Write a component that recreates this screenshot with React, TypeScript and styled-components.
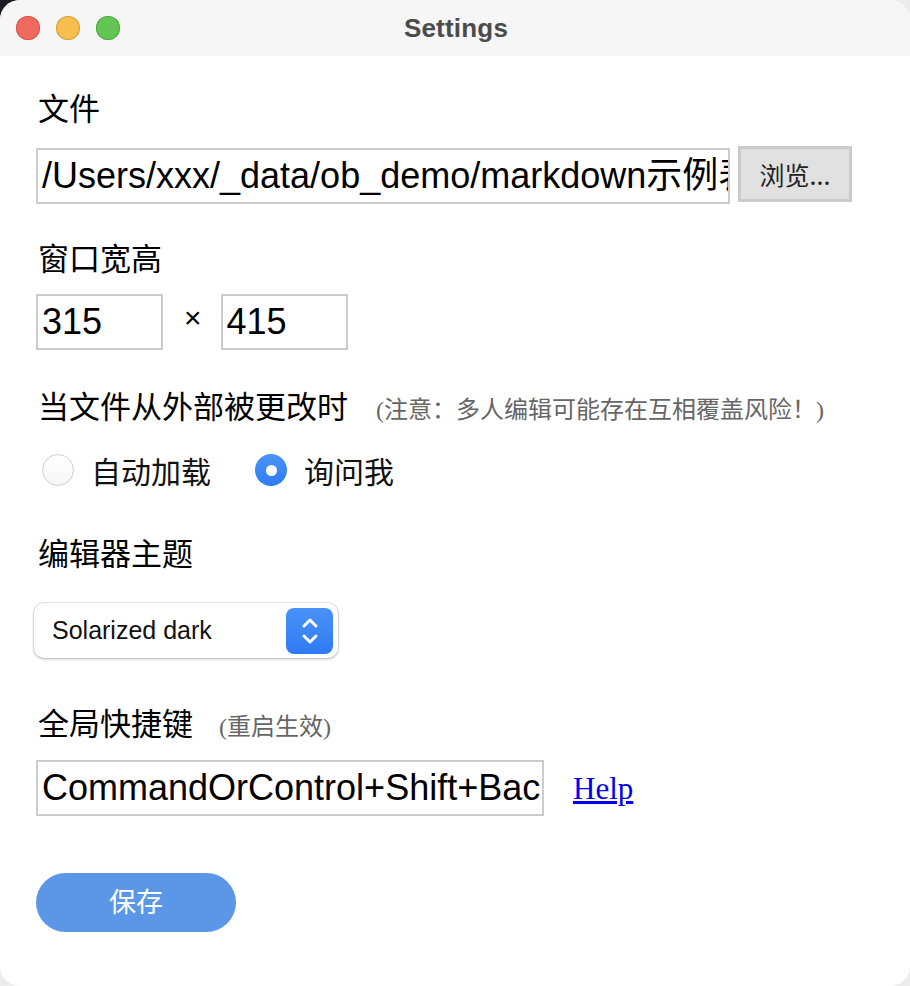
import React from "react";
import styled, { createGlobalStyle } from "styled-components";

const Global = createGlobalStyle`
  html, body { margin: 0; padding: 0; }
  body {
    width: 910px;
    height: 986px;
    overflow: hidden;
    background: linear-gradient(135deg, #1b1b24 0%, #1b1b24 2.5%, #ececec 6%, #ececec 100%);
  }
  #root { width: 910px; height: 986px; }
`;

const Window = styled.div`
  width: 910px;
  height: 986px;
  background: #ffffff;
  border-radius: 20px;
  overflow: hidden;
  display: flex;
  flex-direction: column;
`;

const TitleBar = styled.div`
  position: relative;
  height: 56px;
  flex: none;
  background: #f6f6f6;
  display: flex;
  align-items: center;
  justify-content: center;
`;

const Lights = styled.div`
  position: absolute;
  left: 16px;
  top: 16px;
  display: flex;
  gap: 16px;
`;

const Light = styled.span<{ $c: string; $b: string }>`
  width: 24px;
  height: 24px;
  border-radius: 50%;
  background: ${(p) => p.$c};
  box-shadow: inset 0 0 0 1px ${(p) => p.$b};
`;

const Title = styled.div`
  font-family: "Liberation Sans", Arial, sans-serif;
  font-weight: 700;
  font-size: 26px;
  color: #4b4b4b;
  letter-spacing: 0.2px;
  margin-left: 2px;
`;

const Content = styled.div`
  display: flex;
  flex-direction: column;
  align-items: flex-start;
  padding: 34px 0 0 36px;
  font-family: "Liberation Serif", "Noto Sans CJK SC", serif;
  color: #000;
`;

const Label = styled.div<{ $mt?: number }>`
  height: 40px;
  line-height: 40px;
  font-size: 31px;
  margin-top: ${(p) => p.$mt ?? 0}px;
  padding-left: 2px;
  white-space: nowrap;
  display: flex;
  align-items: baseline;
`;

const Note = styled.span<{ $ml: number }>`
  font-size: 24px;
  color: #666;
  margin-left: ${(p) => p.$ml}px;
`;

const Row = styled.div<{ $mt: number }>`
  display: flex;
  align-items: center;
  margin-top: ${(p) => p.$mt}px;
`;

const TextInput = styled.div<{ $w: number }>`
  box-sizing: border-box;
  width: ${(p) => p.$w}px;
  height: 56px;
  border: 2px solid #cccccc;
  background: #fff;
  padding: 0 4px;
  overflow: hidden;
  white-space: nowrap;
  font-family: "Liberation Sans", "Noto Sans CJK SC", Arial, sans-serif;
  font-size: 36px;
  line-height: 52px;
  color: #000;
`;

const BrowseButton = styled.div`
  box-sizing: border-box;
  margin-left: 8px;
  margin-top: -4px;
  width: 114px;
  height: 56px;
  background: #e1e1e1;
  border: 3px solid #cbcbcb;
  display: flex;
  align-items: center;
  justify-content: center;
  font-family: "Noto Sans CJK SC", sans-serif;
  font-size: 25px;
  color: #222;
`;

const Times = styled.span`
  font-family: "Liberation Sans", Arial, sans-serif;
  font-size: 30px;
  margin: 0 19px 8px 21px;
`;

const RadioGroup = styled.div`
  display: flex;
  align-items: center;
  margin-top: 22px;
  height: 40px;
  padding-left: 6px;
`;

const RadioItem = styled.label`
  display: flex;
  align-items: center;
  margin-right: 44px;
  font-family: "Noto Sans CJK SC", sans-serif;
  font-size: 30px;
  color: #111;
`;

const RadioCircle = styled.span<{ $on?: boolean }>`
  box-sizing: border-box;
  width: 32px;
  height: 32px;
  border-radius: 50%;
  margin-right: 17px;
  display: flex;
  align-items: center;
  justify-content: center;
  ${(p) =>
    p.$on
      ? `background: linear-gradient(#4b93f8, #2f7cf4); border: none;`
      : `background: linear-gradient(#ffffff, #f6f6f6); border: 1px solid #cfcfcf;`}
`;

const RadioDot = styled.span`
  width: 11px;
  height: 11px;
  border-radius: 50%;
  background: #fff;
`;

const Select = styled.div`
  box-sizing: border-box;
  margin-top: 28px;
  margin-left: -2px;
  width: 304px;
  height: 55px;
  border-radius: 10px;
  background: #fff;
  box-shadow: 0 0 0 1px rgba(0, 0, 0, 0.08), 0 1px 3px rgba(0, 0, 0, 0.25);
  display: flex;
  align-items: center;
  justify-content: space-between;
  padding: 0 5px 0 18px;
`;

const SelectText = styled.span`
  font-family: "Liberation Sans", Arial, sans-serif;
  font-size: 25px;
  color: #111;
`;

const SelectArrows = styled.span`
  width: 47px;
  height: 46px;
  border-radius: 8px;
  background: linear-gradient(#4a92f8, #2f7af4);
  display: flex;
  align-items: center;
  justify-content: center;
`;

const HelpLink = styled.a`
  margin-left: 29px;
  font-family: "Liberation Serif", serif;
  font-size: 31px;
  color: #0000ee;
  text-decoration: underline;
  margin-top: 2px;
`;

const SaveButton = styled.button`
  margin-top: 57px;
  width: 200px;
  height: 59px;
  border: none;
  border-radius: 30px;
  background: #5b97e6;
  color: #fff;
  font-family: "Noto Sans CJK SC", sans-serif;
  font-size: 27px;
  display: flex;
  align-items: center;
  justify-content: center;
  padding: 0 0 4px 0;
`;

export default function App() {
  return (
    <>
      <Global />
      <Window>
        <TitleBar>
          <Lights>
            <Light $c="#ee6a5f" $b="#d8564b" />
            <Light $c="#f5be4f" $b="#d9a23a" />
            <Light $c="#62c554" $b="#4eab40" />
          </Lights>
          <Title>Settings</Title>
        </TitleBar>
        <Content>
          <Label>文件</Label>
          <Row $mt={18}>
            <TextInput $w={694}>/Users/xxx/_data/ob_demo/markdown示例表格.md</TextInput>
            <BrowseButton>浏览...</BrowseButton>
          </Row>
          <Label $mt={36}>窗口宽高</Label>
          <Row $mt={14}>
            <TextInput $w={127}>315</TextInput>
            <Times>×</Times>
            <TextInput $w={127}>415</TextInput>
          </Row>
          <Label $mt={38}>
            当文件从外部被更改时
            <Note $ml={28}>(注意：多人编辑可能存在互相覆盖风险！)</Note>
          </Label>
          <RadioGroup>
            <RadioItem>
              <RadioCircle />
              自动加载
            </RadioItem>
            <RadioItem>
              <RadioCircle $on>
                <RadioDot />
              </RadioCircle>
              询问我
            </RadioItem>
          </RadioGroup>
          <Label $mt={45}>编辑器主题</Label>
          <Select>
            <SelectText>Solarized dark</SelectText>
            <SelectArrows>
              <svg width="20" height="32" viewBox="0 0 20 32" fill="none" stroke="#fff" strokeWidth="3" strokeLinecap="round" strokeLinejoin="round">
                <path d="M4 11 L10 5 L16 11" />
                <path d="M4 21 L10 27 L16 21" />
              </svg>
            </SelectArrows>
          </Select>
          <Label $mt={47}>
            全局快捷键
            <Note $ml={26}>(重启生效)</Note>
          </Label>
          <Row $mt={15}>
            <TextInput $w={508}>CommandOrControl+Shift+Backspace</TextInput>
            <HelpLink href="#">Help</HelpLink>
          </Row>
          <SaveButton>保存</SaveButton>
        </Content>
      </Window>
    </>
  );
}
